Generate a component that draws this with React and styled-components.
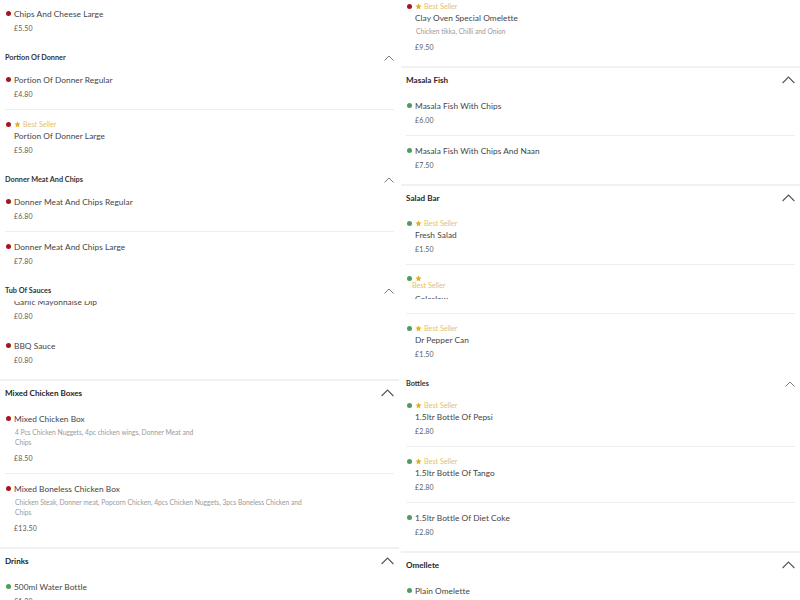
import React from "react";
import styled, { createGlobalStyle, css } from "styled-components";

const GlobalStyle = createGlobalStyle`
  html, body { margin: 0; padding: 0; background: #fff; }
  body { font-family: Lato, "Open Sans", "Liberation Sans", sans-serif; color: #333; }
  * { box-sizing: border-box; }
`;

const Page = styled.div`
  display: grid;
  grid-template-columns: 1fr 1fr;
  column-gap: 2px;
  width: 800px;
  height: 600px;
  overflow: hidden;
`;

const Column = styled.div`
  display: flex;
  flex-direction: column;
  margin-top: ${(p) => p.$offset}px;
`;

const Section = styled.section`
  display: flex;
  flex-direction: column;
  ${(p) =>
    p.$big &&
    css`
      margin-top: 4px;
      border-top: 2px solid #f1f1f1;
    `}
`;

const Header = styled.div`
  display: flex;
  align-items: center;
  justify-content: space-between;
  padding: ${(p) => (p.$big ? "6px 5px 5px" : "10px 5px 2px")};
  background: #fff;
`;

const Title = styled.h3`
  margin: 0;
  font-weight: 700;
  color: ${(p) => (p.$big ? "#262626" : "#333")};
  font-size: ${(p) => (p.$big ? "8.1px" : "7.3px")};
  line-height: ${(p) => (p.$big ? "12px" : "10px")};
`;

const ClipTop = styled.div`
  overflow: hidden;
  margin-top: 3px;
`;

const Item = styled.div`
  margin: 0 5px;
  padding: 9px 0 ${(p) => p.$padBottom || 10}px;
  border-bottom: 1px solid #eeeeee;
  &:last-child { border-bottom: none; }
`;

const Row = styled.div`
  display: grid;
  grid-template-columns: 9px 1fr;
  align-items: start;
`;

const Dot = styled.span`
  display: block;
  width: 5px;
  height: 5px;
  margin: ${(p) => (p.$small ? "1.5px" : "3px")} 0 0 1px;
  border-radius: 50%;
  background: ${(p) => (p.$veg ? "#4e9d5c" : "#a3161f")};
  opacity: ${(p) => (p.$hidden ? 0 : 1)};
`;

const Content = styled.div`
  display: flex;
  flex-direction: column;
`;

const NameClip = styled.div`
  margin-top: 3px;
  height: 6px;
  overflow: hidden;
`;

const Badge = styled.div`
  display: flex;
  align-items: center;
  gap: 2px;
  height: ${(p) => (p.$wrapped ? 8 : 11)}px;
`;

const BadgeLabel = styled.span`
  display: block;
  font-size: 7.2px;
  line-height: 8px;
  color: #e4c269;
  ${(p) =>
    p.$wrapped &&
    css`
      margin-left: -3px;
    `}
`;

const Name = styled.div`
  font-size: 8.3px;
  line-height: 12px;
  letter-spacing: 0.05px;
  color: #444;
`;

const Desc = styled.div`
  margin: 2px 0 3px 1px;
  font-size: 6.7px;
  line-height: 10px;
  color: #9a9a9a;
  span { display: block; }
`;

const Price = styled.div`
  margin-top: 3px;
  font-size: 7px;
  line-height: 10px;
  letter-spacing: 0.15px;
  color: #5a5a5a;
`;

const Star = () => (
  <svg width="7" height="7" viewBox="0 0 24 24" aria-hidden="true">
    <path
      fill="#e2ae22"
      d="M12 1.5l3.1 6.6 7.2.9-5.3 5 1.4 7.1L12 17.6l-6.4 3.5 1.4-7.1-5.3-5 7.2-.9z"
    />
  </svg>
);

const Chevron = ({ big }) =>
  big ? (
    <svg width="13" height="8" viewBox="0 0 13 8" aria-hidden="true">
      <polyline points="0.6,7 6.5,1 12.4,7" fill="none" stroke="#555" strokeWidth="1.1" />
    </svg>
  ) : (
    <svg width="10" height="7" viewBox="0 0 10 7" aria-hidden="true">
      <polyline points="0.5,5.5 5,1 9.5,5.5" fill="none" stroke="#7a7a7a" strokeWidth="1" />
    </svg>
  );

function MenuItem({ item }) {
  const wrapped = item.badge === "wrapped";
  const body = (
    <>
      <Name>{item.name}</Name>
      {item.desc && (
        <Desc>
          {item.desc.map((l) => (
            <span key={l}>{l}</span>
          ))}
        </Desc>
      )}
      <Price>{item.price}</Price>
    </>
  );
  return (
    <Item $padBottom={item.clip ? 14 : 10} style={item.tuck ? { marginTop: item.tuck } : undefined}>
      <Row>
        <Dot $veg={item.veg} $hidden={item.noDot} $small={wrapped} />
        <Content>
          {item.badge && (
            <Badge $wrapped={wrapped}>
              <Star />
              {!wrapped && <BadgeLabel>Best Seller</BadgeLabel>}
            </Badge>
          )}
          {wrapped && <BadgeLabel $wrapped>Best Seller</BadgeLabel>}
          {item.clip ? <NameClip>{body}</NameClip> : body}
        </Content>
      </Row>
    </Item>
  );
}

function MenuSection({ section }) {
  const items = section.items.map((it) => <MenuItem key={it.name} item={it} />);
  return (
    <Section $big={section.big}>
      {section.title && (
        <Header $big={section.big}>
          <Title $big={section.big}>{section.title}</Title>
          <Chevron big={section.big} />
        </Header>
      )}
      {section.clipFirst ? (
        <>
          <ClipTop>{items[0]}</ClipTop>
          {items.slice(1)}
        </>
      ) : (
        items
      )}
    </Section>
  );
}

const left = [
  { items: [{ name: "Chips And Cheese Large", price: "£5.50" }] },
  {
    title: "Portion Of Donner",
    items: [
      { name: "Portion Of Donner Regular", price: "£4.80" },
      { name: "Portion Of Donner Large", price: "£5.80", badge: true },
    ],
  },
  {
    title: "Donner Meat And Chips",
    items: [
      { name: "Donner Meat And Chips Regular", price: "£6.80" },
      { name: "Donner Meat And Chips Large", price: "£7.80" },
    ],
  },
  {
    title: "Tub Of Sauces",
    clipFirst: true,
    items: [
      { name: "Garlic Mayonnaise Dip", price: "£0.80", noDot: true, tuck: -14 },
      { name: "BBQ Sauce", price: "£0.80" },
    ],
  },
  {
    title: "Mixed Chicken Boxes",
    big: true,
    items: [
      {
        name: "Mixed Chicken Box",
        price: "£8.50",
        desc: ["4 Pcs Chicken Nuggets, 4pc chicken wings, Donner Meat and", "Chips"],
      },
      {
        name: "Mixed Boneless Chicken Box",
        price: "£13.50",
        desc: [
          "Chicken Steak, Donner meat, Popcorn Chicken, 4pcs Chicken Nuggets, 3pcs Boneless Chicken and",
          "Chips",
        ],
      },
    ],
  },
  {
    title: "Drinks",
    big: true,
    items: [{ name: "500ml Water Bottle", price: "£1.20", veg: true }],
  },
];

const right = [
  {
    items: [
      {
        name: "Clay Oven Special Omelette",
        price: "£9.50",
        badge: true,
        desc: ["Chicken tikka, Chilli and Onion"],
      },
    ],
  },
  {
    title: "Masala Fish",
    big: true,
    items: [
      { name: "Masala Fish With Chips", price: "£6.00", veg: true },
      { name: "Masala Fish With Chips And Naan", price: "£7.50", veg: true },
    ],
  },
  {
    title: "Salad Bar",
    big: true,
    items: [
      { name: "Fresh Salad", price: "£1.50", veg: true, badge: true },
      { name: "Coleslaw", price: "£1.50", veg: true, badge: "wrapped", clip: true },
      { name: "Dr Pepper Can", price: "£1.50", veg: true, badge: true },
    ],
  },
  {
    title: "Bottles",
    items: [
      { name: "1.5ltr Bottle Of Pepsi", price: "£2.80", veg: true, badge: true },
      { name: "1.5ltr Bottle Of Tango", price: "£2.80", veg: true, badge: true },
      { name: "1.5ltr Bottle Of Diet Coke", price: "£2.80", veg: true },
    ],
  },
  {
    title: "Omellete",
    big: true,
    items: [{ name: "Plain Omelette", price: "£4.50", veg: true }],
  },
];

export default function App() {
  return (
    <>
      <GlobalStyle />
      <Page>
        <Column $offset={-1}>
          {left.map((s, i) => (
            <MenuSection key={i} section={s} />
          ))}
        </Column>
        <Column $offset={-8}>
          {right.map((s, i) => (
            <MenuSection key={i} section={s} />
          ))}
        </Column>
      </Page>
    </>
  );
}
